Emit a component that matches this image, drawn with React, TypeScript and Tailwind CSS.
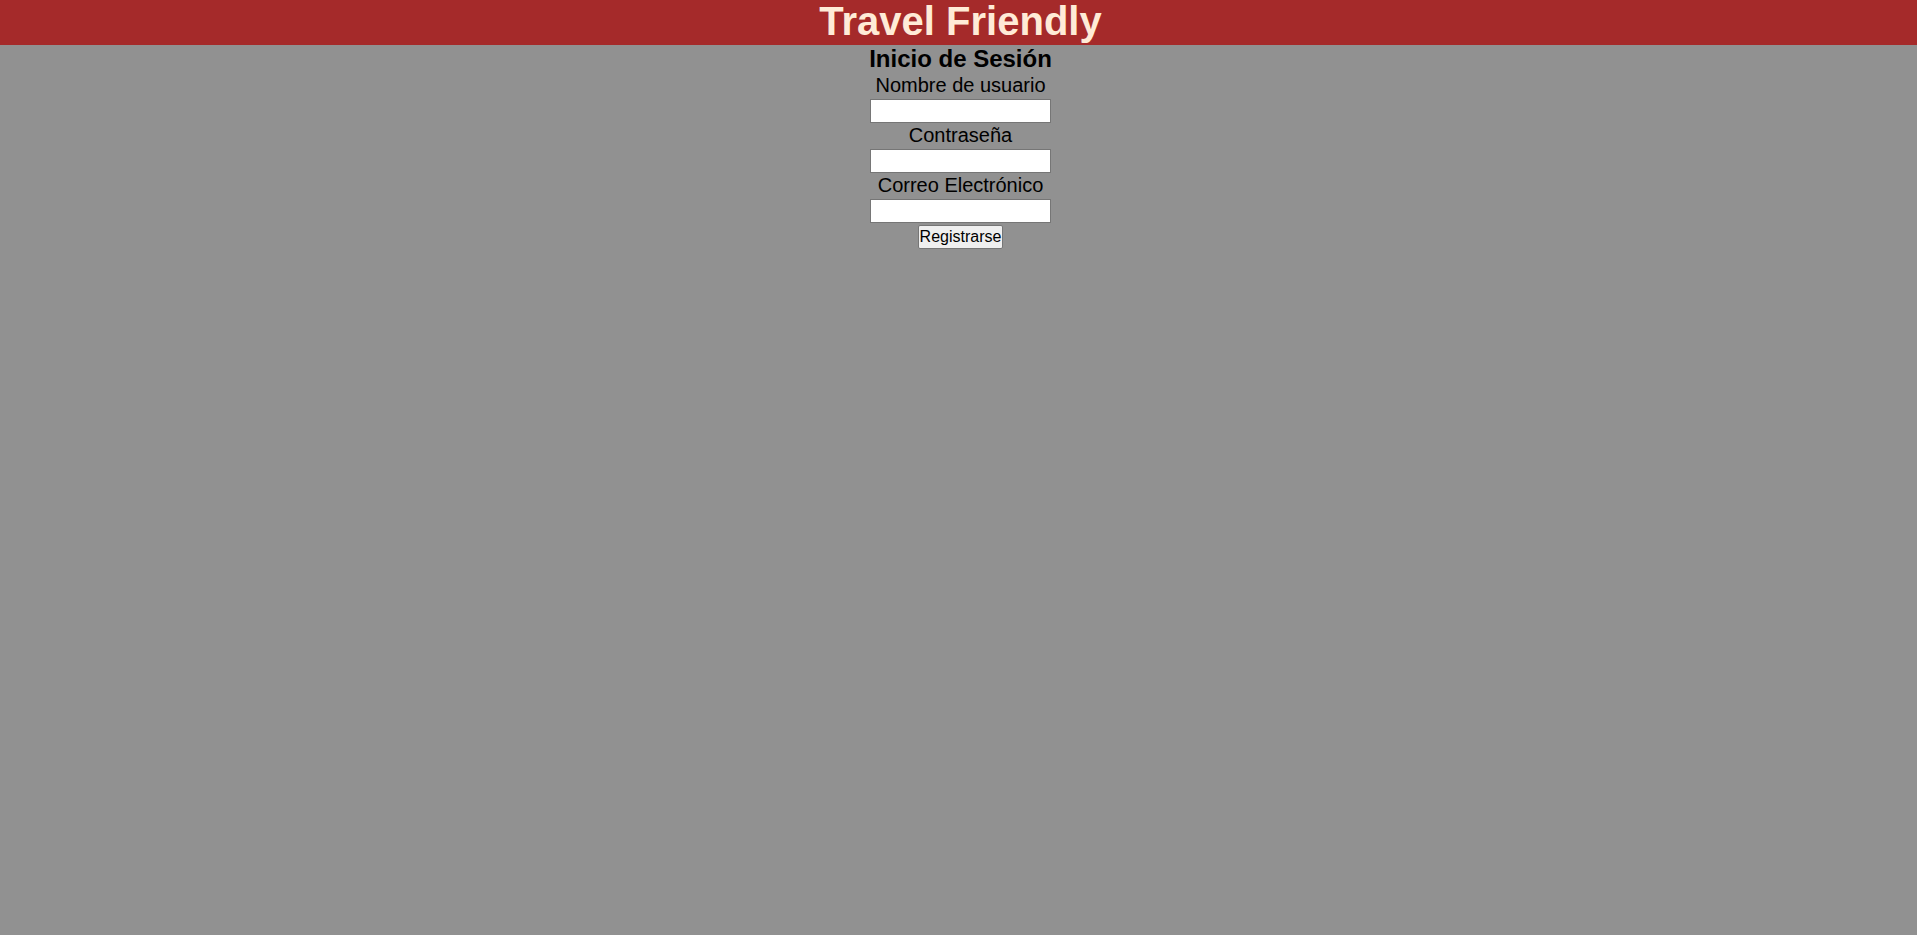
import React from "react";

type Field = { id: string; label: string; type: string };

const fields: Field[] = [
  { id: "usuario", label: "Nombre de usuario", type: "text" },
  { id: "contrasena", label: "Contraseña", type: "password" },
  { id: "correo", label: "Correo Electrónico", type: "email" },
];

export default function App() {
  return (
    <div className="min-h-screen bg-[#919191] font-['Liberation_Sans',Arial,sans-serif] text-black">
      <header className="bg-[#a52a2a] pb-0.5 pl-1 text-center">
        <h1 className="text-[40px] leading-[43px] font-bold text-[#ffebd7]">Travel Friendly</h1>
      </header>
      <main className="pl-1">
        <form className="flex flex-col items-center" onSubmit={(e) => e.preventDefault()}>
          <h2 className="text-2xl leading-[28px] font-bold">Inicio de Sesión</h2>
          {fields.map((f) => (
            <div key={f.id} className="flex flex-col items-center">
              <label htmlFor={f.id} className="text-xl leading-6">
                {f.label}
              </label>
              <input
                id={f.id}
                name={f.id}
                type={f.type}
                className="mt-0.5 h-6 w-[181px] border border-[#767676] bg-white px-0.5 text-base outline-none"
              />
            </div>
          ))}
          <button
            type="submit"
            className="mt-0.5 h-6 rounded-xs border border-[#767676] bg-[#efefef] px-px text-base leading-5"
          >
            Registrarse
          </button>
        </form>
      </main>
    </div>
  );
}
